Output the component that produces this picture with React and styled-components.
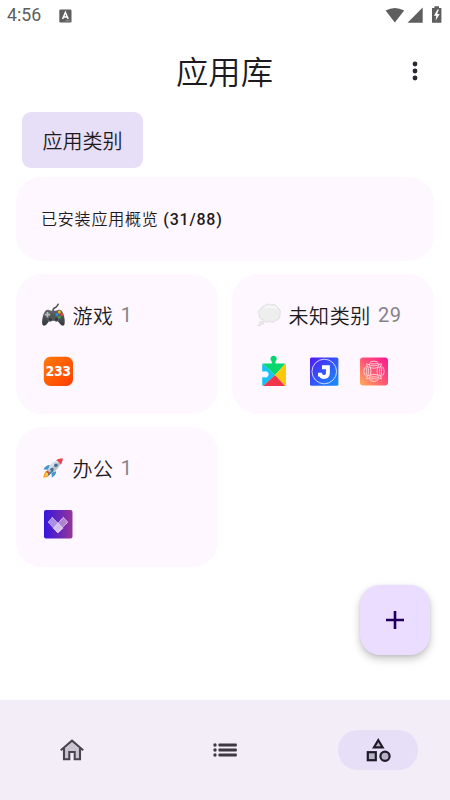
import React from 'react';
import styled, { createGlobalStyle } from 'styled-components';

const GlobalStyle = createGlobalStyle`
  * {
    box-sizing: border-box;
  }

  body {
    margin: 0;
    background: #ffffff;
    font-family: Roboto, 'Noto Sans CJK SC', sans-serif;
    color: #1d1b20;
  }

  svg {
    display: block;
    flex: none;
  }
`;

const Screen = styled.div`
  display: flex;
  flex-direction: column;
  width: 450px;
  height: 800px;
  overflow: hidden;
`;

const StatusBar = styled.div`
  display: flex;
  align-items: center;
  height: 31px;
  padding: 0 7px 0 7px;
  color: #5e5e5e;
`;

const Clock = styled.span`
  width: 52px;
  font-size: 17.7px;
  line-height: 31px;
`;

const StatusIcons = styled.div`
  display: flex;
  align-items: center;
  margin: -2px 0 0 auto;
`;

const TopBar = styled.header`
  display: grid;
  grid-template-columns: 70px 1fr 70px;
  align-items: center;
  justify-items: center;
  height: 81px;
`;

const Title = styled.h1`
  grid-column: 2;
  margin: 0;
  padding: 2px 1px 0 0;
  font-size: 32.3px;
  font-weight: 350;
  line-height: 48px;
`;

const MenuButton = styled.button`
  padding: 0 0 2px;
  border: 0;
  background: none;
`;

const Main = styled.main`
  flex: 1;
  display: flex;
  flex-direction: column;
  padding: 0 16px;
`;

const Chip = styled.div`
  align-self: flex-start;
  height: 56px;
  margin: 0 0 9px 6.4px;
  padding: 1px 20.5px 0 20px;
  border-radius: 9px;
  background: #e7def7;
  font-size: 20px;
  font-weight: 350;
  line-height: 58px;
`;

const Overview = styled.section`
  height: 84px;
  margin-bottom: 13px;
  padding: 1px 25px 0;
  border-radius: 26px;
  background: #fef7ff;
  font-size: 16px;
  font-weight: 350;
  line-height: 84px;
  letter-spacing: 0.8px;
`;

const Count = styled.span`
  font-weight: 500;
`;

const Grid = styled.div`
  display: grid;
  grid-template-columns: 1fr 1fr;
  gap: 13.5px 14px;
`;

const Card = styled.section`
  height: 139.6px;
  padding: 26px 25px 0;
  border-radius: 26px;
  background: #fef7ff;
`;

const CardHeader = styled.div`
  display: flex;
  align-items: center;
  height: 30px;
  font-size: 20px;
  font-weight: 350;
  letter-spacing: 0.6px;
  white-space: nowrap;
`;

const CardName = styled.span`
  margin: 0 7px 0 6.5px;
`;

const CardNumber = styled.span`
  font-weight: 400;
  color: #85828a;
`;

const AppIcons = styled.div`
  display: flex;
  gap: 20px;
  padding: 25px 0 0 2px;
`;

const Fab = styled.button`
  display: flex;
  align-items: center;
  justify-content: center;
  align-self: flex-end;
  width: 70px;
  height: 70px;
  margin: auto 4px 45px 0;
  padding: 0;
  border: 0;
  border-radius: 20px;
  background: #eaddff;
  box-shadow: 0 4px 8px rgba(0, 0, 0, 0.22), 0 1px 3px rgba(0, 0, 0, 0.08);
`;

const BottomNav = styled.nav`
  display: grid;
  grid-template-columns: 143px 1fr 144px;
  align-items: center;
  justify-items: center;
  height: 100px;
  background: #f3edf7;
`;

const NavItem = styled.div`
  display: flex;
  align-items: center;
  justify-content: center;
  width: 80px;
  height: 40px;
  border-radius: 20px;
  background: ${({ $active }) => ($active ? '#e7def7' : 'transparent')};
`;

const GamepadEmoji = () => (
  <svg width="25" height="26" viewBox="0 0 25 26">
    <defs>
      <linearGradient id="pad" x1="0" y1="0" x2="0" y2="1">
        <stop offset="0" stopColor="#626769" />
        <stop offset="1" stopColor="#33383b" />
      </linearGradient>
    </defs>
    <path d="M12 9.5C11.5 6.5 13 6.3 14.7 5.3C16 4.5 16.4 3.6 17.2 2.2" fill="none" stroke="#42474a" strokeWidth="1.4" strokeLinecap="round" />
    <path d="M5 8.2Q7 7.4 9.1 8.4Q12.4 9.2 15.8 8.4Q18.5 7.2 20.4 8.6C22.7 10.8 24.3 17.8 23.6 21.8C23.3 24.2 21 24.3 19.3 22.3L16.4 18.8H8.4L5.7 22.3C4 24.3 1.6 24.2 1.2 21.8C.7 17.7 2.4 10.2 5 8.2Z" fill="url(#pad)" />
    <path d="M6.5 10V15.4M3.8 12.7H9.2" stroke="#b8bcbe" strokeWidth="1.7" />
    <circle cx="9.3" cy="17.2" r="2.2" fill="#35393b" stroke="#777c7e" strokeWidth=".6" />
    <circle cx="15.4" cy="17.2" r="2.2" fill="#35393b" stroke="#777c7e" strokeWidth=".6" />
    <circle cx="18.4" cy="10" r="1.5" fill="#f6b91c" />
    <circle cx="15.9" cy="12.5" r="1.5" fill="#348de8" />
    <circle cx="20.8" cy="12.5" r="1.5" fill="#e94335" />
    <circle cx="18.4" cy="14.9" r="1.5" fill="#43a047" />
  </svg>
);

const ThoughtEmoji = () => (
  <svg width="25" height="26" viewBox="0 0 25 26">
    <g fill="#eeeeee" stroke="#d9dadb" strokeWidth=".9">
      <path d="M7.2 4.2C8.8 2 12.1 1.5 14.1 3.2C16.4 1.7 19.9 3.2 20.5 5.8C23.1 7 24 9.7 22.8 11.9C23.7 15.1 21.7 18 18.8 18.2C17.4 20.4 14.4 20.8 12.7 19.2C10.5 20.8 7.2 20 6.4 17.7C3.3 17.7 1.2 15.2 2.3 12.5C.8 10.2 2 7.4 4.2 6.8C4.5 5.2 5.6 4.3 7.2 4.2Z" />
      <ellipse cx="4.8" cy="20.8" rx="2.2" ry="1.5" />
      <circle cx="2.2" cy="23.3" r=".9" />
    </g>
    <path d="M8 6.4C10 4 13 4 14.5 5.3C17 4.4 19 5.6 19.4 7.4" fill="none" stroke="#f8f8f8" strokeWidth="1.8" />
  </svg>
);

const RocketEmoji = () => (
  <svg width="25" height="26" viewBox="0 0 25 26">
    <path d="M6.3 15.5C3.6 16.5 3 19.3 2.3 22.7C5.7 22 8.4 21.3 9.2 18.4Z" fill="#f79a1d" />
    <path d="M6.2 17.3C4.8 18.2 4 19.8 3.6 21.4C5.3 21 6.9 20.2 7.6 18.8Z" fill="#ffd54f" />
    <path d="M8.9 10.1C6.6 9.8 3.8 11.4 2.6 14.4L7.3 14.8ZM15.1 16.2C15.4 18.5 13.8 21.1 10.8 22.4L10.5 17.8Z" fill="#4594cf" />
    <path d="M6.2 16.4C8 10.6 12.2 5.4 20.9 3.7C19.5 12.1 14.4 17 8.5 18.6Z" fill="#b6c2cb" />
    <path d="M7 15.1C9.4 9.5 13.1 5.6 18.3 4.6L19.5 5.6C16 8.4 11.5 12.4 7 15.1Z" fill="#d9e1e7" />
    <path d="M15.2 5.2C17.4 3.7 19.8 3.3 21.9 3.2C21.8 5.3 21.1 7.7 19.8 9.8C19 7.9 17.2 6 15.2 5.2Z" fill="#e8434b" />
    <path d="M5.9 16.1L8.8 19" stroke="#d93d44" strokeWidth="1.5" />
    <circle cx="14.9" cy="10.2" r="1.8" fill="#436f8d" />
    <circle cx="10.9" cy="14.2" r="1.5" fill="#436f8d" />
    <path d="M11.8 15.6L7.7 19.5" stroke="#367eae" strokeWidth="1.7" strokeLinecap="round" />
  </svg>
);

const Icon233 = () => (
  <svg width="30" height="32" viewBox="0 0 30 32">
    <defs>
      <linearGradient id="orange" x1="0" y1="0" x2="1" y2="1">
        <stop offset="0" stopColor="#ff7b08" />
        <stop offset="1" stopColor="#ff3d00" />
      </linearGradient>
    </defs>
    <rect x=".8" y="1.8" width="29.2" height="29.2" rx="6.5" fill="url(#orange)" />
    <text x="15.3" y="21.2" textAnchor="middle" textLength="25" lengthAdjust="spacingAndGlyphs" fontFamily="DejaVu Sans, sans-serif" fontSize="13.2" fontWeight="700" fill="#fff" stroke="#fff" strokeWidth=".2">233</text>
  </svg>
);

const IconPuzzle = () => (
  <svg width="30" height="32" viewBox="0 0 30 32">
    <defs>
      <clipPath id="piece">
        <path d="M4 8.5H12.8V6.4A3.1 3.1 0 1 1 16.4 6.4V8.5H25.3Q27 8.5 27 10V29.5Q27 31 25.5 31H4.7Q3.2 31 3.2 29.5V22.2H5.3A3.1 3.1 0 1 0 5.3 16.5H3.2V9.5Q3.2 8.5 4 8.5Z" />
      </clipPath>
    </defs>
    <g clipPath="url(#piece)">
      <path d="M3 8L16 20L3 32Z" fill="#12c3f5" />
      <path d="M3 8V0H27V8L16 20Z" fill="#08d76d" />
      <path d="M27 8V32L16 20Z" fill="#fdc70b" />
      <path d="M3 32L16 20L27 32Z" fill="#f23649" />
    </g>
  </svg>
);

const IconJ = () => (
  <svg width="30" height="32" viewBox="0 0 30 32">
    <defs>
      <linearGradient id="blue" x1="0" y1="0" x2="1" y2="1">
        <stop offset="0" stopColor="#5319f3" />
        <stop offset="1" stopColor="#1592ff" />
      </linearGradient>
    </defs>
    <rect x="1" y="2.4" width="28.4" height="28.4" rx="1.5" fill="url(#blue)" />
    <circle cx="15.3" cy="16.5" r="12.3" fill="none" stroke="#dce5ff" strokeWidth=".9" />
    <path d="M13 12.2H18.9V18.2A3.9 3.9 0 0 1 11.4 19.6L9 19.6" fill="none" stroke="#fff" strokeWidth="3.9" />
  </svg>
);

const IconWaves = () => (
  <svg width="30" height="32" viewBox="0 0 30 32">
    <defs>
      <linearGradient id="pink" x1="0" y1="1" x2="1" y2="0">
        <stop offset="0" stopColor="#ffae55" />
        <stop offset=".5" stopColor="#ff5574" />
        <stop offset="1" stopColor="#fb1694" />
      </linearGradient>
    </defs>
    <rect x="1" y="2.4" width="28" height="28.2" rx="3" fill="url(#pink)" />
    <g fill="none" stroke="#ffd7e0" strokeWidth=".85">
      {[0, 90, 180, 270].map((angle) => (
        <g key={angle} transform={`rotate(${angle} 15 16.3)`}>
          <path d="M7.5 11.2Q15 15.2 22.5 11.2" />
          <path d="M7.6 8.6Q15 13.2 22.4 8.6" />
          <path d="M10.2 8.2Q15 9.9 19.8 8.2" />
          <path d="M11.2 6.9Q15 5.4 18.8 6.9" />
        </g>
      ))}
    </g>
  </svg>
);

const IconHeart = () => (
  <svg width="30" height="32" viewBox="0 0 30 32">
    <defs>
      <linearGradient id="violet" x1="0" y1="0" x2="1" y2="0">
        <stop offset="0" stopColor="#3515df" />
        <stop offset="1" stopColor="#963599" />
      </linearGradient>
    </defs>
    <rect x="1" y="2" width="28.5" height="28.6" rx="2" fill="url(#violet)" />
    <path d="M9.3 9.3L20 20.3L14.8 24.7L5.2 14.2Z" fill="#fff" fillOpacity=".5" stroke="#e9ddfa" strokeWidth=".8" strokeDasharray="1.2 .4" />
    <path d="M20.3 9.3L24.7 14L14.8 24.7L10.5 20.3Z" fill="#fff" fillOpacity=".42" stroke="#f2e9ff" strokeWidth=".9" strokeDasharray="1.2 .4" />
  </svg>
);

const categories = [
  { name: '游戏', count: 1, Emoji: GamepadEmoji, icons: [Icon233] },
  { name: '未知类别', count: 29, Emoji: ThoughtEmoji, icons: [IconPuzzle, IconJ, IconWaves] },
  { name: '办公', count: 1, Emoji: RocketEmoji, icons: [IconHeart] },
];

const App = () => {
  return (
    <>
      <GlobalStyle />
      <Screen>
        <StatusBar>
          <Clock>4:56</Clock>
          <svg width="13" height="14" viewBox="0 0 13 14">
            <rect x=".3" y=".5" width="12.2" height="13" rx="1.2" fill="#5e5e5e" />
            <path d="M3.6 10L6.4 3.5L9.2 10M4.6 8H8.2" fill="none" stroke="#fff" strokeWidth="1.5" />
            <path d="M6.5 11.8H11" stroke="#aaa" strokeWidth=".7" />
          </svg>
          <StatusIcons>
            <svg width="58" height="20" viewBox="0 0 58 20" fill="#5e5e5e">
              <path d="M.6 5.5Q9.8.3 19.2 5.5L9.8 17.4Z" />
              <path d="M22.5 17.8H37.7V2.4Z" />
              <path d="M49.4 1.3H54V3H56.4V17.8H47V3H49.4Z" />
              <path d="M52.5 4.5L48.9 10.8H51.3L50.6 15.8L54.7 9H52.2L53.9 4.5Z" fill="#fff" />
            </svg>
          </StatusIcons>
        </StatusBar>

        <TopBar>
          <Title>应用库</Title>
          <MenuButton aria-label="menu">
            <svg width="6" height="22" viewBox="0 0 6 22" fill="#2a2730">
              <circle cx="3" cy="4" r="2.4" />
              <circle cx="3" cy="11" r="2.4" />
              <circle cx="3" cy="18" r="2.4" />
            </svg>
          </MenuButton>
        </TopBar>

        <Main>
          <Chip>应用类别</Chip>
          <Overview>
            已安装应用概览 <Count>(31/88)</Count>
          </Overview>
          <Grid>
            {categories.map(({ name, count, Emoji, icons }) => (
              <Card key={name}>
                <CardHeader>
                  <Emoji />
                  <CardName>{name}</CardName>
                  <CardNumber>{count}</CardNumber>
                </CardHeader>
                <AppIcons>
                  {icons.map((AppIcon, i) => (
                    <AppIcon key={i} />
                  ))}
                </AppIcons>
              </Card>
            ))}
          </Grid>
          <Fab aria-label="add">
            <svg width="18" height="18" viewBox="0 0 18 18">
              <path d="M9 0V18M0 9H18" stroke="#21005d" strokeWidth="2.6" />
            </svg>
          </Fab>
        </Main>

        <BottomNav>
          <NavItem>
            <svg width="24" height="22" viewBox="0 0 24 22">
              <path d="M4.3 10V20.3H9.3V13.5H14.7V20.3H19.7V10L12 3Z" fill="#cac4d0" />
              <path d="M.8 11.2L12 1.6L23.2 11.2M4 9.3V20.3H9.3V13H14.7V20.3H20V9.3" fill="none" stroke="#49454f" strokeWidth="2.1" />
            </svg>
          </NavItem>
          <NavItem>
            <svg width="24" height="14" viewBox="0 0 24 14" fill="#3c3941">
              {[2, 7, 12].map((y) => (
                <g key={y}>
                  <circle cx="2" cy={y} r="1.7" />
                  <rect x="5.5" y={y - 1.5} width="18.3" height="3" rx=".8" />
                </g>
              ))}
            </svg>
          </NavItem>
          <NavItem $active>
            <svg width="26" height="26" viewBox="0 0 26 26" fill="#b9b1c6" stroke="#1d1b28" strokeWidth="2.2">
              <path d="M13.3 3.2L17.6 10.3H9Z" />
              <rect x="2.8" y="15.2" width="8" height="8" />
              <circle cx="20" cy="19.2" r="4.6" />
            </svg>
          </NavItem>
        </BottomNav>
      </Screen>
    </>
  );
};

export default App;
